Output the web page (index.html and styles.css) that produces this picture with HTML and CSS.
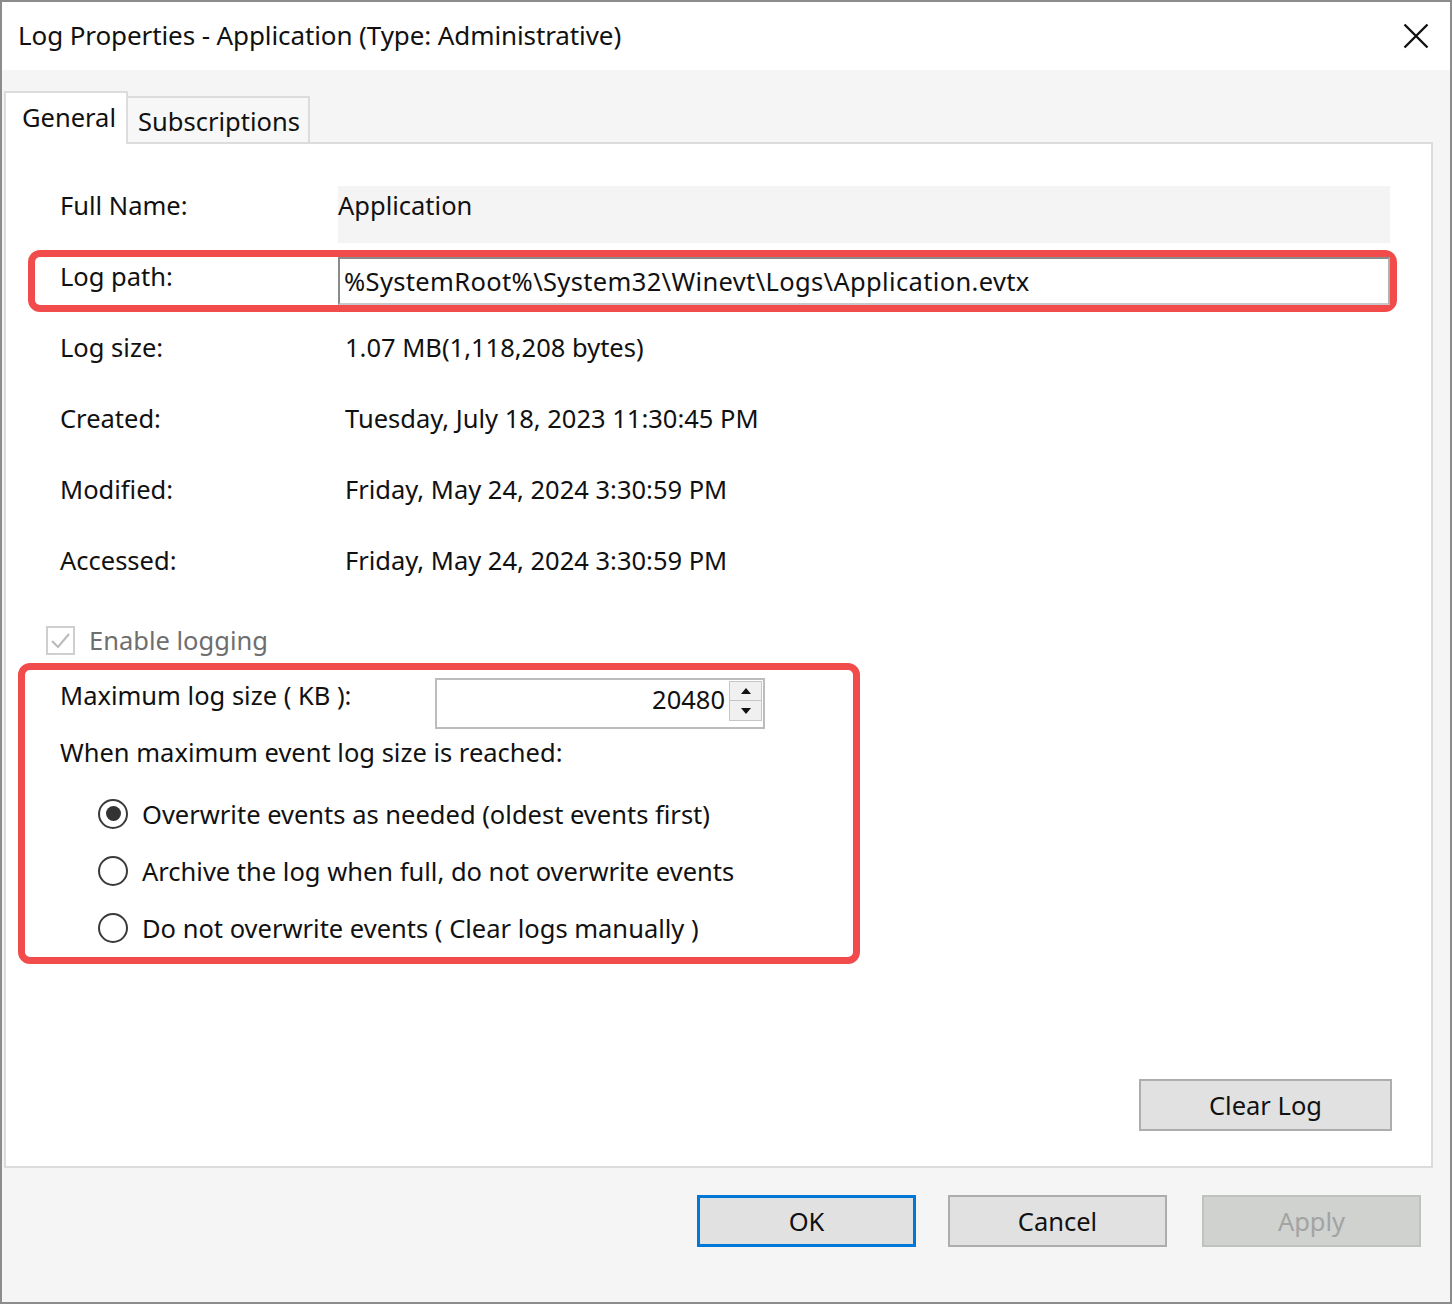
FILE: index.html
```html
<!DOCTYPE html>
<html>
<head>
<meta charset="utf-8">
<title>Log Properties</title>
<link rel="stylesheet" href="styles.css">
</head>
<body>
<div class="window">
  <div class="titlebar">
    <span class="title">Log Properties - Application (Type: Administrative)</span>
    <svg class="close" width="26" height="26" viewBox="0 0 26 26"><path d="M1.5 1.5L24.5 24.5M24.5 1.5L1.5 24.5" stroke="#111" stroke-width="2.4" fill="none"/></svg>
  </div>
  <div class="tabs">
    <div class="tab tab-active">General</div>
    <div class="tab">Subscriptions</div>
  </div>
  <div class="panel">
    <div class="row row-name">
      <span class="label">Full Name:</span>
      <span class="readonly">Application</span>
    </div>
    <div class="hl hl-path">
      <div class="row-path">
        <span class="label">Log path:</span>
        <span class="input">%SystemRoot%\System32\Winevt\Logs\Application.evtx</span>
      </div>
    </div>
    <div class="row info"><span class="label">Log size:</span><span class="value">1.07 MB(1,118,208 bytes)</span></div>
    <div class="row info"><span class="label">Created:</span><span class="value">Tuesday, July 18, 2023 11:30:45 PM</span></div>
    <div class="row info"><span class="label">Modified:</span><span class="value">Friday, May 24, 2024 3:30:59 PM</span></div>
    <div class="row info"><span class="label">Accessed:</span><span class="value">Friday, May 24, 2024 3:30:59 PM</span></div>
    <div class="check-row">
      <span class="checkbox"><svg width="25" height="25" viewBox="0 0 25 25"><path d="M4 13L10 19L21 6" stroke="#b9b9b9" stroke-width="2" fill="none"/></svg></span>
      <span class="check-label">Enable logging</span>
    </div>
    <div class="hl hl-size">
      <div class="row-max">
        <span class="label label-max">Maximum log size ( KB ):</span>
        <div class="spin">
          <span class="spin-val">20480</span>
          <div class="spin-btns">
            <span class="spin-btn"><svg width="10" height="6" viewBox="0 0 10 6"><path d="M0 6L5 0L10 6Z" fill="#111"/></svg></span>
            <span class="spin-btn"><svg width="10" height="6" viewBox="0 0 10 6"><path d="M0 0L5 6L10 0Z" fill="#111"/></svg></span>
          </div>
        </div>
      </div>
      <div class="when">When maximum event log size is reached:</div>
      <div class="radios">
        <div class="radio-row"><span class="radio radio-on"><span class="dot"></span></span><span>Overwrite events as needed (oldest events first)</span></div>
        <div class="radio-row"><span class="radio"></span><span>Archive the log when full, do not overwrite events</span></div>
        <div class="radio-row"><span class="radio"></span><span>Do not overwrite events ( Clear logs manually )</span></div>
      </div>
    </div>
    <div class="panel-foot">
      <button class="btn btn-clear">Clear Log</button>
    </div>
  </div>
  <div class="footer">
    <button class="btn btn-ok">OK</button>
    <button class="btn btn-cancel">Cancel</button>
    <button class="btn btn-disabled">Apply</button>
  </div>
</div>
</body>
</html>
```

FILE: styles.css
```css
* { box-sizing: border-box; }
html, body { margin: 0; padding: 0; background: #ffffff; }
body {
  font-family: "Noto Sans", "Open Sans", sans-serif;
  font-size: 25.5px;
  color: #111;
}
.window {
  width: 1452px;
  height: 1304px;
  border: 2px solid #8c8c8c;
  background: #f5f5f5;
  display: flex;
  flex-direction: column;
}
.titlebar {
  height: 68px;
  background: #ffffff;
  display: flex;
  align-items: center;
  justify-content: space-between;
  padding: 0 21px 2px 16px;
}
.title { font-size: 26px; line-height: 1; letter-spacing: -0.1px; }
.close { display: block; margin-top: 2px; }
.tabs {
  height: 72px;
  display: flex;
  align-items: flex-end;
  padding-left: 2px;
}
.tab {
  height: 46px;
  padding: 0 10px 0 10px;
  width: 182px;
  border: 2px solid #dcdcdc;
  border-bottom: none;
  border-left: none;
  background: #f7f7f7;
  line-height: 46px;
  margin-bottom: 0;
}
.tab-active {
  width: 124px;
  height: 53px;
  margin-bottom: -2px;
  border-left: 2px solid #dcdcdc;
  background: #ffffff;
  line-height: 48px;
  padding-left: 16px;
  position: relative;
  z-index: 1;
}
.panel {
  flex: 1;
  margin: 0 17px 0 2px;
  background: #ffffff;
  border: 2px solid #dcdcdc;
  display: flex;
  flex-direction: column;
  padding-top: 42px;
}
.row { display: flex; padding-left: 54px; }
.label { width: 278px; flex: none; }
.row-name { height: 57px; }
.row-name .label { line-height: 38px; }
.readonly {
  width: 1052px;
  height: 57px;
  background: #f4f4f4;
  line-height: 38px;
  padding-left: 0;
}
.hl {
  border: 7px solid #f24b4b;
  border-radius: 12px;
}
.hl-path {
  margin: 7px 34px 0 22px;
  height: 62px;
  padding-left: 25px;
}
.row-path { display: flex; }
.row-path .label { line-height: 38px; }
.input {
  width: 1052px;
  height: 48px;
  border: 2px solid #8a8a8a;
  border-right-color: #b0b0b0;
  border-bottom-color: #c8c8c8;
  line-height: 44px;
  padding-left: 4px;
  background: #fff;
  white-space: nowrap;
  letter-spacing: 0.35px;
}
.info { height: 71px; line-height: 70px; }
.value { padding-left: 7px; }
.check-row {
  margin-top: 25px;
  height: 38px;
  padding-left: 40px;
  display: flex;
  align-items: center;
  color: #6e6e6e;
}
.checkbox {
  width: 29px;
  height: 29px;
  border: 2px solid #cfcfcf;
  display: flex;
  align-items: center;
  justify-content: center;
  margin-right: 14px;
}
.checkbox svg { display: block; }
.hl-size {
  margin: 4px 0 0 12px;
  width: 842px;
  height: 301px;
  padding: 8px 0 0 35px;
}
.row-max { display: flex; }
.label-max { width: 375px; line-height: 34px; }
.spin {
  width: 330px;
  height: 51px;
  border: 2px solid #bcbcbc;
  display: flex;
  justify-content: flex-end;
  align-items: flex-start;
  padding: 1px 1px 0 0;
}
.spin-val { line-height: 36px; padding-right: 4px; }
.spin-btns { display: flex; flex-direction: column; width: 33px; }
.spin-btn {
  height: 20px;
  border: 1px solid #c6c6c6;
  background: #f0f0f0;
  display: flex;
  align-items: center;
  justify-content: center;
}
.spin-btn + .spin-btn { border-top: none; }
.spin-btn svg { display: block; }
.when { height: 46px; line-height: 46px; }
.radios { margin-top: 10px; padding-left: 38px; }
.radio-row {
  height: 57px;
  display: flex;
  align-items: center;
}
.radio {
  width: 30px;
  height: 30px;
  border: 2px solid #3a3a3a;
  border-radius: 50%;
  margin-right: 14px;
  display: flex;
  align-items: center;
  justify-content: center;
  flex: none;
}
.dot {
  width: 15px;
  height: 15px;
  border-radius: 50%;
  background: #333;
}
.panel-foot {
  margin-top: auto;
  display: flex;
  justify-content: flex-end;
  padding: 0 39px 35px 0;
}
.btn {
  font-family: inherit;
  font-size: 25.5px;
  color: #111;
  width: 219px;
  height: 52px;
  background: #e1e1e1;
  border: 2px solid #adadad;
  padding: 0;
  margin: 0;
}
.btn-clear { width: 253px; }
.footer {
  height: 134px;
  display: flex;
  justify-content: flex-end;
  align-items: flex-start;
  padding: 27px 29px 0 0;
}
.btn-ok { border: 3px solid #0078d7; }
.btn-cancel { margin-left: 32px; margin-right: 35px; }
.btn-disabled {
  background: #cfd2cf;
  border-color: #bfc2bf;
  color: #a3a3a3;
}
```
